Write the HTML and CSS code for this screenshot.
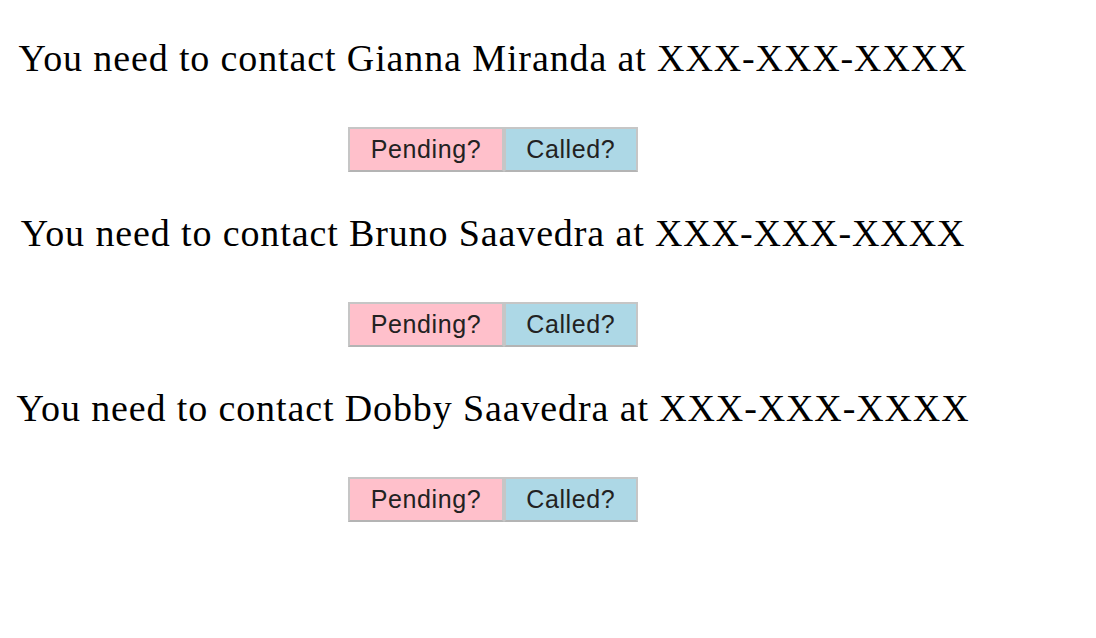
FILE: index.html
```html
<!DOCTYPE html>
<html lang="en">
<head>
<meta charset="utf-8">
<title>Contacts</title>
<link rel="stylesheet" href="styles.css">
</head>
<body>
<div class="contacts">
  <div class="item">
    <p class="message">You need to contact Gianna Miranda at XXX-XXX-XXXX</p>
    <div class="actions"><button class="btn pending">Pending?</button><button class="btn called">Called?</button></div>
  </div>
  <div class="item">
    <p class="message">You need to contact Bruno Saavedra at XXX-XXX-XXXX</p>
    <div class="actions"><button class="btn pending">Pending?</button><button class="btn called">Called?</button></div>
  </div>
  <div class="item">
    <p class="message">You need to contact Dobby Saavedra at XXX-XXX-XXXX</p>
    <div class="actions"><button class="btn pending">Pending?</button><button class="btn called">Called?</button></div>
  </div>
</div>
</body>
</html>
```
FILE: styles.css
```css
html, body {
  margin: 0;
  padding: 0;
  background: #ffffff;
}
body {
  font-family: "Liberation Serif", "Times New Roman", serif;
  color: #000;
}
.contacts {
  width: 970px;
  margin-left: 8px;
  padding-top: 38px;
  display: flex;
  flex-direction: column;
  gap: 41px;
}
.item {
  display: flex;
  flex-direction: column;
  align-items: center;
  gap: 49px;
}
.message {
  margin: 0;
  font-size: 38px;
  line-height: 40px;
  letter-spacing: 0.88px;
  white-space: nowrap;
}
.actions {
  display: flex;
}
.btn {
  height: 45px;
  padding: 0 20.5px;
  font-family: "Liberation Sans", Arial, sans-serif;
  font-size: 25px;
  letter-spacing: 0.6px;
  color: #222;
  border: 2px solid #c6c6c6;
  border-bottom-color: #b4b4b4;
  margin: 0;
  cursor: pointer;
}
.pending {
  background: #ffc0cb;
}
.called {
  background: #add8e6;
}
```
